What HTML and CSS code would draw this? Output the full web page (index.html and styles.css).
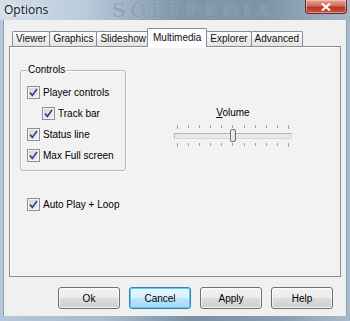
FILE: index.html
```html
<!DOCTYPE html>
<html lang="en">
<head>
  <meta charset="UTF-8">
  <meta name="viewport" content="width=device-width, initial-scale=1.0">
  <title>Options</title>
  <link rel="stylesheet" href="styles.css">
</head>
<body>
  <div class="window">
    <div class="titlebar">
      <span class="title">Options</span>
      <span class="watermark">SOFTPEDIA</span>
      <button class="close" title="Close">
        <svg width="12" height="10" viewBox="0 0 12 10">
          <path d="M2 1.5 L10 8.5 M10 1.5 L2 8.5" stroke="#fff" stroke-width="2.2" fill="none"/>
        </svg>
      </button>
    </div>

    <div class="client">
      <div class="tabs">
        <div class="tab">Viewer</div>
        <div class="tab">Graphics</div>
        <div class="tab">Slideshow</div>
        <div class="tab active">Multimedia</div>
        <div class="tab">Explorer</div>
        <div class="tab">Advanced</div>
      </div>

      <div class="panel">
        <div class="panel-top">
          <div class="group">
            <span class="group-title">Controls</span>
            <div class="check"><span class="box"><svg width="11" height="11" viewBox="0 0 11 11"><path d="M2 5.5 L4.3 8.5 L9 2" stroke="#2b3f8c" stroke-width="1.6" fill="none"/></svg></span>Player controls</div>
            <div class="check indent"><span class="box"><svg width="11" height="11" viewBox="0 0 11 11"><path d="M2 5.5 L4.3 8.5 L9 2" stroke="#2b3f8c" stroke-width="1.6" fill="none"/></svg></span>Track bar</div>
            <div class="check"><span class="box"><svg width="11" height="11" viewBox="0 0 11 11"><path d="M2 5.5 L4.3 8.5 L9 2" stroke="#2b3f8c" stroke-width="1.6" fill="none"/></svg></span>Status line</div>
            <div class="check"><span class="box"><svg width="11" height="11" viewBox="0 0 11 11"><path d="M2 5.5 L4.3 8.5 L9 2" stroke="#2b3f8c" stroke-width="1.6" fill="none"/></svg></span>Max Full screen</div>
          </div>

          <div class="volume">
            <div class="volume-label"><u>V</u>olume</div>
            <div class="ticks">
              <i></i><i></i><i></i><i></i><i></i><i></i><i></i><i></i><i></i><i></i><i></i>
            </div>
            <div class="track">
              <div class="channel"></div>
              <div class="thumb"></div>
            </div>
            <div class="ticks">
              <i></i><i></i><i></i><i></i><i></i><i></i><i></i><i></i><i></i><i></i><i></i>
            </div>
          </div>
        </div>

        <div class="check autoplay"><span class="box"><svg width="11" height="11" viewBox="0 0 11 11"><path d="M2 5.5 L4.3 8.5 L9 2" stroke="#2b3f8c" stroke-width="1.6" fill="none"/></svg></span>Auto Play + Loop</div>
      </div>

      <div class="buttons">
        <button class="btn">Ok</button>
        <button class="btn default">Cancel</button>
        <button class="btn">Apply</button>
        <button class="btn">Help</button>
      </div>
    </div>
  </div>
</body>
</html>
```

FILE: styles.css
```css
body {
  margin: 0;
  padding: 0;
  width: 350px;
  height: 321px;
  overflow: hidden;
  font-family: "Liberation Sans", Arial, sans-serif;
  font-size: 10px;
  color: #000;
}

.window {
  position: relative;
  width: 350px;
  height: 321px;
  background: linear-gradient(90deg, #b4c6d7 0%, #a9bccd 30%, #7b90a4 55%, #889db1 80%, #a8bbcc 100%);
  display: flex;
  flex-direction: column;
  overflow: hidden;
}

.titlebar {
  position: relative;
  height: 20px;
  display: flex;
  align-items: flex-start;
  background: linear-gradient(90deg, #d3dfea 0%, #b9cadb 25%, #8096ab 50%, #7c92a7 75%, #a5b8ca 100%);
}

.title {
  font-family: "Open Sans", "Liberation Sans", sans-serif;
  font-size: 12px;
  line-height: 16px;
  margin: 2px 0 0 4px;
  color: #10151a;
  text-shadow: 0 0 6px rgba(255, 255, 255, 0.9);
  position: relative;
  z-index: 1;
}

.watermark {
  position: absolute;
  left: 112px;
  top: 0;
  font-family: "DejaVu Serif", serif;
  font-weight: bold;
  font-size: 19px;
  line-height: 21px;
  letter-spacing: 4px;
  color: rgba(80, 102, 124, 0.35);
  text-shadow: 0 0 2px rgba(210, 225, 238, 0.5);
}

.close {
  margin-left: auto;
  margin-right: 3px;
  width: 42px;
  height: 14px;
  padding: 0;
  border: 1px solid #6d2a25;
  border-top: none;
  border-radius: 0 0 4px 4px;
  background: linear-gradient(#e4a293 0%, #d0705e 45%, #b53a26 55%, #c8503a 100%);
  display: flex;
  align-items: center;
  justify-content: center;
  box-shadow: inset 0 0 0 1px rgba(255, 220, 210, 0.5);
  position: relative;
  z-index: 1;
}

.client {
  margin: 0 3px;
  height: 296px;
  background: #f0f0f0;
  border-left: 1px solid #8fa2b4;
  border-right: 1px solid #8fa2b4;
  box-sizing: border-box;
}

.tabs {
  display: flex;
  align-items: flex-end;
  height: 26px;
  padding-left: 8px;
  position: relative;
  z-index: 1;
}

.tab {
  height: 14px;
  line-height: 14px;
  padding: 0 3px;
  border: 1px solid #898c95;
  border-bottom: none;
  margin-right: -1px;
  border-radius: 2px 2px 0 0;
  background: linear-gradient(#fdfdfd, #e3e3e3);
  color: #111;
}

.tab.active {
  height: 18px;
  line-height: 17px;
  margin: 0 -2px -1px -2px;
  padding: 0 5px;
  background: #fcfcfc;
  position: relative;
  z-index: 2;
}

.tab.active + .tab {
  margin-left: 1px;
}

.panel {
  margin: 0 5px 0 5px;
  height: 231px;
  border: 1px solid #898c95;
  box-sizing: border-box;
  background: #f2f2f2;
  padding: 23px 0 0 10px;
  box-shadow: inset 1px 1px 0 #fff;
}

.panel-top {
  display: flex;
  align-items: flex-start;
}

.group {
  width: 106px;
  height: 101px;
  box-sizing: border-box;
  border: 1px solid #b4b7ba;
  border-radius: 3px;
  box-shadow: 1px 1px 0 #fff, inset 1px 1px 0 #fff;
  padding: 0 6px;
  display: flex;
  flex-direction: column;
  gap: 8px;
}

.group-title {
  align-self: flex-start;
  margin-top: -7px;
  margin-bottom: 2px;
  line-height: 12px;
  padding: 0 1px;
  background: #f2f2f2;
}

.check {
  display: flex;
  align-items: center;
  gap: 3px;
  height: 13px;
  line-height: 13px;
  white-space: nowrap;
}

.check.indent {
  margin-left: 15px;
}

.box {
  width: 11px;
  height: 11px;
  border: 1px solid #8e8f8f;
  background: linear-gradient(135deg, #cfd0d2, #f4f4f4);
  box-shadow: inset 0 0 0 1px #f6f6f6;
  display: flex;
  flex: none;
}

.autoplay {
  margin: 27px 0 0 7px;
}

.volume {
  margin: 37px 0 0 48px;
  width: 118px;
}

.volume-label {
  text-align: center;
  line-height: 12px;
  margin-bottom: 6px;
}

.ticks {
  display: flex;
  justify-content: space-between;
  padding: 0 3px;
  height: 4px;
}

.ticks i {
  width: 1px;
  height: 3px;
  background: #a0a0a0;
}

.ticks i:first-child,
.ticks i:last-child {
  height: 4px;
}

.track {
  position: relative;
  height: 14px;
  display: flex;
  align-items: center;
}

.channel {
  width: 100%;
  height: 6px;
  box-sizing: border-box;
  border: 1px solid #d6d6d6;
  border-top-color: #b3b3b3;
  border-left-color: #b3b3b3;
  background: #e7eaea;
}

.thumb {
  position: absolute;
  left: 56px;
  top: 0;
  width: 6px;
  height: 13px;
  box-sizing: border-box;
  border: 1px solid #707070;
  border-radius: 2px;
  background: linear-gradient(90deg, #f4f4f4, #dcdcdc);
}

.buttons {
  display: flex;
  justify-content: flex-end;
  gap: 9px;
  padding: 10px 13px 0 0;
}

.btn {
  width: 62px;
  height: 22px;
  padding: 0;
  font-family: "Liberation Sans", Arial, sans-serif;
  font-size: 10px;
  color: #000;
  border: 1px solid #707070;
  border-radius: 3px;
  background: linear-gradient(#f2f2f2 0%, #ebebeb 50%, #dddddd 51%, #cfcfcf 100%);
  box-shadow: inset 0 0 0 1px rgba(255, 255, 255, 0.7);
}

.btn.default {
  border-color: #3c7fb1;
  background: linear-gradient(#eaf6fd 0%, #d9f0fc 50%, #bee6fd 51%, #a7d9f5 100%);
  box-shadow: inset 0 0 0 1px #48d1f9;
}
```
